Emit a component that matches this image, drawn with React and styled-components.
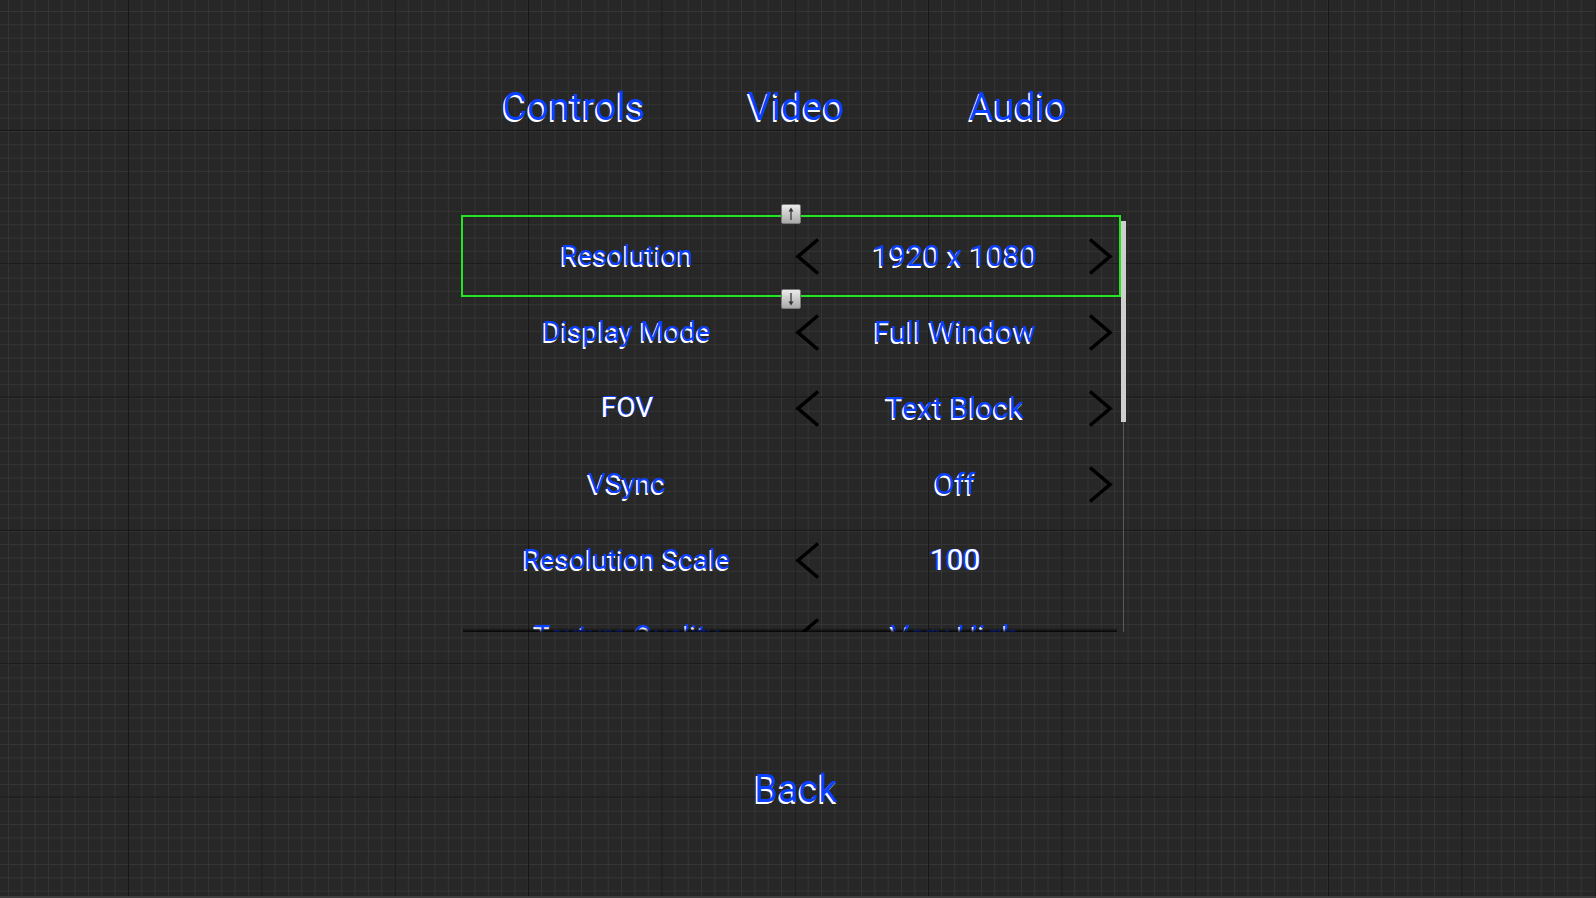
import React from "react";
import styled, { createGlobalStyle, css } from "styled-components";

const BLUE = "#0a40ff";

const rows = [
  { label: "Resolution", value: "1920 x 1080", prev: true, next: true },
  { label: "Display Mode", value: "Full Window", prev: true, next: true },
  { label: "FOV", value: "Text Block", prev: true, next: true, labelLight: true },
  { label: "VSync", value: "Off", prev: false, next: true },
  { label: "Resolution Scale", value: "100", prev: true, next: false, valueLight: true },
  { label: "Texture Quality", value: "Very High", prev: true, next: false },
];

const Chevron = ({ dir }) => (
  <svg width="25" height="37" viewBox="0 0 25 37">
    <polyline
      points={dir === "left" ? "23,1.5 3,18.5 23,35.5" : "2,1.5 22,18.5 2,35.5"}
      fill="none"
      stroke="#000"
      strokeWidth="3.6"
      strokeLinecap="butt"
    />
  </svg>
);

const HandleArrow = ({ up }) => (
  <svg width="18" height="18" viewBox="0 0 18 18">
    <line x1="9" y1={up ? 5 : 3} x2="9" y2={up ? 15 : 13} stroke="#444" strokeWidth="1.4" />
    <polygon points={up ? "9,2.5 6.5,6.5 11.5,6.5" : "9,15.5 6.5,11.5 11.5,11.5"} fill="#333" />
  </svg>
);

const App = () => {
  return (
    <>
      <GlobalStyle />
      <Page>
        <TabBar>
          <Tab>Controls</Tab>
          <Tab>Video</Tab>
          <Tab>Audio</Tab>
        </TabBar>

        <ListFrame>
          <Viewport>
            {rows.map((r) => (
              <Row key={r.label}>
                <LabelCell>
                  <Label $light={r.labelLight}>{r.label}</Label>
                </LabelCell>
                <ValueCell>
                  <ArrowBtn $side="left" $hidden={!r.prev}>
                    <Chevron dir="left" />
                  </ArrowBtn>
                  <Value $light={r.valueLight}>{r.value}</Value>
                  <ArrowBtn $side="right" $hidden={!r.next}>
                    <Chevron dir="right" />
                  </ArrowBtn>
                </ValueCell>
              </Row>
            ))}
          </Viewport>
          <ScrollBar>
            <Thumb />
            <Track />
          </ScrollBar>

          <FocusBox>
            <Handle $pos="top">
              <HandleArrow up />
            </Handle>
            <Handle $pos="bottom">
              <HandleArrow />
            </Handle>
          </FocusBox>
        </ListFrame>

        <BackButton>Back</BackButton>
      </Page>
    </>
  );
};

const GlobalStyle = createGlobalStyle`
  html, body {
    margin: 0;
    padding: 0;
  }
  body {
    background-color: #272727;
    background-image:
      linear-gradient(to right, #171717 1px, transparent 1px),
      linear-gradient(to bottom, #171717 1px, transparent 1px),
      linear-gradient(to right, #353535 1px, transparent 1px),
      linear-gradient(to bottom, #353535 1px, transparent 1px);
    background-size:
      133.333px 100%,
      100% 133.333px,
      13.333px 100%,
      100% 13.333px;
    background-position:
      128px 0,
      0 130px,
      8px 0,
      0 11px;
    font-family: Roboto, "Liberation Sans", sans-serif;
  }
`;

const blueText = css`
  color: ${BLUE};
  text-shadow: -1.5px 1.5px 0 #fff;
`;

const lightText = css`
  color: #fff;
  text-shadow: 1.5px -1.5px 0 ${BLUE};
`;

const Page = styled.div`
  box-sizing: border-box;
  width: 1596px;
  height: 898px;
  padding: 85px 0 0 463px;
  display: flex;
  flex-direction: column;
  border-bottom: 2px solid #3e3e3e;
`;

const TabBar = styled.div`
  display: flex;
  width: 666px;
`;

const Tab = styled.div`
  width: 222px;
  text-align: center;
  font-size: 38px;
  line-height: 44px;
  color: ${BLUE};
  text-shadow: -1.5px 2px 0 #fff;
  cursor: pointer;
`;

const ListFrame = styled.div`
  position: relative;
  margin-top: 89px;
  width: 664px;
  height: 414px;
  display: flex;
`;

const Viewport = styled.div`
  position: relative;
  width: 656px;
  height: 100%;
  overflow: hidden;
  display: flex;
  flex-direction: column;

  &::after {
    content: "";
    position: absolute;
    left: 0;
    right: 2px;
    bottom: 0;
    height: 4px;
    background: linear-gradient(to top, rgba(0, 0, 0, 0.85), rgba(0, 0, 0, 0));
  }
`;

const Row = styled.div`
  flex: 0 0 76px;
  height: 76px;
  display: flex;
  align-items: center;
`;

const LabelCell = styled.div`
  width: 328px;
  display: flex;
  justify-content: center;
`;

const Label = styled.span`
  font-size: 28px;
  line-height: 76px;
  white-space: nowrap;
  ${(p) => (p.$light ? lightText : blueText)};
`;

const ValueCell = styled.div`
  width: 328px;
  height: 100%;
  display: flex;
  align-items: center;
`;

const Value = styled.span`
  flex: 1;
  text-align: center;
  font-size: 30px;
  line-height: 76px;
  white-space: nowrap;
  ${(p) =>
    p.$light
      ? css`
          color: #fff;
          text-shadow: -1.5px 0 0 ${BLUE}, 1px 0 0 ${BLUE};
        `
      : blueText};
`;

const ArrowBtn = styled.div`
  width: 32px;
  height: 100%;
  box-sizing: border-box;
  display: flex;
  align-items: center;
  padding-left: ${(p) => (p.$side === "left" ? "4px" : "1px")};
  visibility: ${(p) => (p.$hidden ? "hidden" : "visible")};
  cursor: pointer;
  & > svg {
    display: block;
  }
`;

const ScrollBar = styled.div`
  width: 8px;
  display: flex;
  flex-direction: column;
  align-items: center;
  padding-left: 1px;
  box-sizing: border-box;
`;

const Thumb = styled.div`
  margin-top: 3px;
  width: 5px;
  height: 201px;
  background: #cfcfcf;
`;

const Track = styled.div`
  flex: 1;
  width: 1px;
  background: #5a5a5a;
`;

const FocusBox = styled.div`
  position: absolute;
  top: -3px;
  left: -2px;
  width: 660px;
  height: 82px;
  box-sizing: border-box;
  border: 2px solid #22e622;
  pointer-events: none;
`;

const Handle = styled.div`
  position: absolute;
  left: 318px;
  ${(p) => (p.$pos === "top" ? "top: -13px;" : "bottom: -14px;")}
  width: 20px;
  height: 20px;
  box-sizing: border-box;
  border: 1px solid #7a7a7a;
  border-radius: 2px;
  background: linear-gradient(to bottom, #ececec, #a9a9a9);
  display: flex;
  align-items: center;
  justify-content: center;
`;

const BackButton = styled.div`
  margin-top: 135px;
  width: 666px;
  text-align: center;
  font-size: 38px;
  line-height: 44px;
  color: ${BLUE};
  text-shadow: -1.5px 2px 0 #fff;
  cursor: pointer;
`;

export default App;
